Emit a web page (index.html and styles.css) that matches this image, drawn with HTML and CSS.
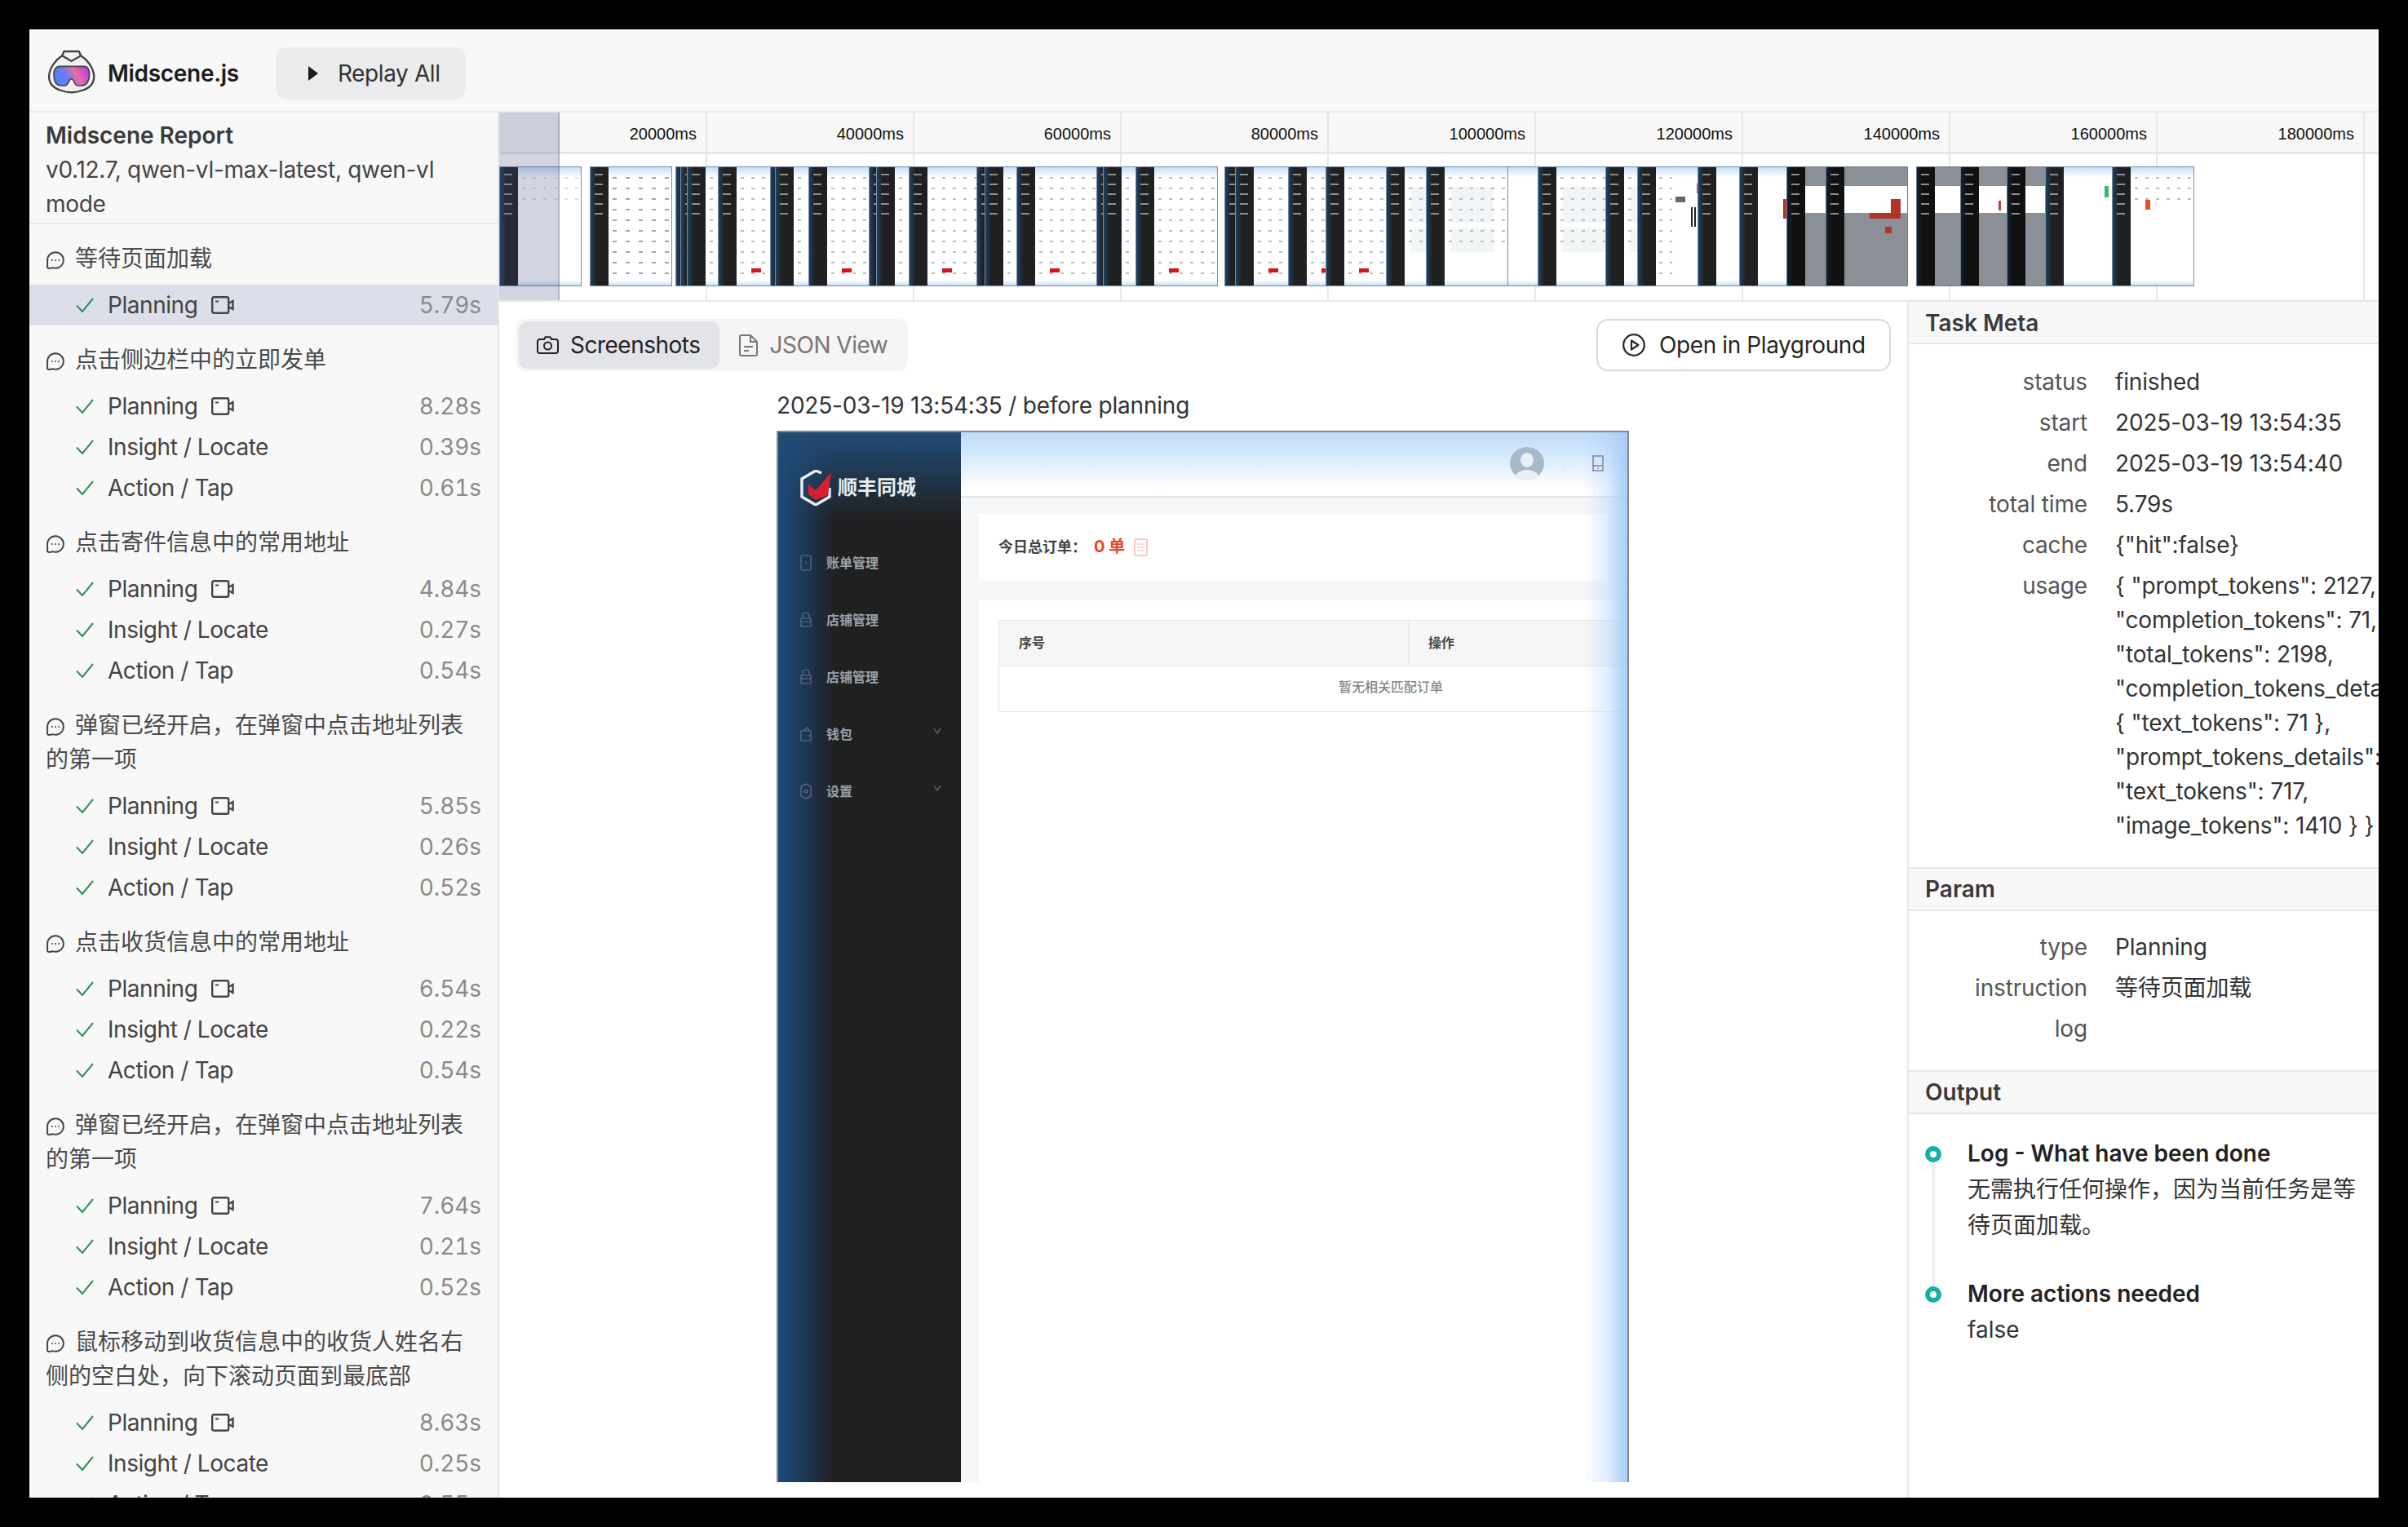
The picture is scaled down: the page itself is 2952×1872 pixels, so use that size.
FILE: index.html
```html
<!DOCTYPE html>
<html lang="en">
<head>
  <meta charset="UTF-8" />
  <title>Midscene Report</title>
  <link rel="stylesheet" href="styles.css">
</head>
<body>
  <!-- shared icons -->
  <svg class="defs" width="0" height="0">
    <symbol id="i-chat" viewBox="0 0 24 24">
      <path d="M12 2.200a9.800 9.800 0 1 1-3.600 18.900c-1.600.7-3.400 1-5.400.7-.6-.1-.9-.5-.9-1V12A9.800 9.800 0 0 1 12 2.200Z" fill="none" stroke="currentColor" stroke-width="2"/>
      <circle cx="7.800" cy="12" r="1" fill="currentColor"/><circle cx="12" cy="12" r="1" fill="currentColor"/><circle cx="16.200" cy="12" r="1" fill="currentColor"/>
    </symbol>
    <symbol id="i-check" viewBox="0 0 22 18">
      <path d="M1 9.500 8 17 21 1" fill="none" stroke="currentColor" stroke-width="2"/>
    </symbol>
    <symbol id="i-video" viewBox="0 0 28 22">
      <rect x="1.200" y="1.200" width="20" height="19.600" rx="2" fill="none" stroke="currentColor" stroke-width="2.400"/>
      <path d="M5 6.500h4" stroke="currentColor" stroke-width="2"/>
      <path d="M22 8.500 26.500 6v10L22 13.500" fill="none" stroke="currentColor" stroke-width="2.400"/>
    </symbol>
  </svg>

  <div class="app">
    <header class="topbar">
      <svg class="logo" viewBox="24 36 176 162">
        <defs>
          <linearGradient id="lens" x1="0" y1="0.6" x2="1" y2="0.3">
            <stop offset="0" stop-color="#4a86f5"/>
            <stop offset="0.4" stop-color="#7a78ee"/>
            <stop offset="0.62" stop-color="#ea6f9c"/>
            <stop offset="1" stop-color="#b63aee"/>
          </linearGradient>
        </defs>
        <path d="M85 42H140L147 58C170 72 192 100 195 130C197 160 178 178 150 186C125 195 100 195 75 186C48 178 28 160 30 130C33 100 55 72 78 58Z" fill="#f2f2f2" stroke="#444" stroke-width="7" stroke-linejoin="round"/>
        <path d="M78 58 112 78 147 58" fill="none" stroke="#444" stroke-width="7"/>
        <path d="M70 97H158C172 97 180 110 178 130C176 155 165 168 148 168H135C128 168 124 160 120 150C117 142 107 142 104 150C100 160 96 168 88 168H75C58 168 48 155 48 130C46 110 55 97 70 97Z" fill="url(#lens)" stroke="#444" stroke-width="5"/>
      </svg>
      <span class="brand">Midscene.js</span>
      <button class="replay"><span class="replay-arrow"></span>Replay All</button>
    </header>

    <div class="workspace">
      <aside class="sidebar">
        <div class="report">
          <div class="report-name">Midscene Report</div>
          <div>v0.12.7, qwen-vl-max-latest, qwen-vl mode</div>
        </div>

        <section class="group">
          <h3 class="group-title"><svg class="chat"><use href="#i-chat"/></svg>等待页面加载</h3>
          <div class="step selected"><svg class="check"><use href="#i-check"/></svg>Planning<svg class="video"><use href="#i-video"/></svg><span class="time">5.79s</span></div>
        </section>

        <section class="group">
          <h3 class="group-title"><svg class="chat"><use href="#i-chat"/></svg>点击侧边栏中的立即发单</h3>
          <div class="step"><svg class="check"><use href="#i-check"/></svg>Planning<svg class="video"><use href="#i-video"/></svg><span class="time">8.28s</span></div>
          <div class="step"><svg class="check"><use href="#i-check"/></svg>Insight / Locate<span class="time">0.39s</span></div>
          <div class="step"><svg class="check"><use href="#i-check"/></svg>Action / Tap<span class="time">0.61s</span></div>
        </section>

        <section class="group">
          <h3 class="group-title"><svg class="chat"><use href="#i-chat"/></svg>点击寄件信息中的常用地址</h3>
          <div class="step"><svg class="check"><use href="#i-check"/></svg>Planning<svg class="video"><use href="#i-video"/></svg><span class="time">4.84s</span></div>
          <div class="step"><svg class="check"><use href="#i-check"/></svg>Insight / Locate<span class="time">0.27s</span></div>
          <div class="step"><svg class="check"><use href="#i-check"/></svg>Action / Tap<span class="time">0.54s</span></div>
        </section>

        <section class="group">
          <h3 class="group-title"><svg class="chat"><use href="#i-chat"/></svg>弹窗已经开启，在弹窗中点击地址列表的第一项</h3>
          <div class="step"><svg class="check"><use href="#i-check"/></svg>Planning<svg class="video"><use href="#i-video"/></svg><span class="time">5.85s</span></div>
          <div class="step"><svg class="check"><use href="#i-check"/></svg>Insight / Locate<span class="time">0.26s</span></div>
          <div class="step"><svg class="check"><use href="#i-check"/></svg>Action / Tap<span class="time">0.52s</span></div>
        </section>

        <section class="group">
          <h3 class="group-title"><svg class="chat"><use href="#i-chat"/></svg>点击收货信息中的常用地址</h3>
          <div class="step"><svg class="check"><use href="#i-check"/></svg>Planning<svg class="video"><use href="#i-video"/></svg><span class="time">6.54s</span></div>
          <div class="step"><svg class="check"><use href="#i-check"/></svg>Insight / Locate<span class="time">0.22s</span></div>
          <div class="step"><svg class="check"><use href="#i-check"/></svg>Action / Tap<span class="time">0.54s</span></div>
        </section>

        <section class="group">
          <h3 class="group-title"><svg class="chat"><use href="#i-chat"/></svg>弹窗已经开启，在弹窗中点击地址列表的第一项</h3>
          <div class="step"><svg class="check"><use href="#i-check"/></svg>Planning<svg class="video"><use href="#i-video"/></svg><span class="time">7.64s</span></div>
          <div class="step"><svg class="check"><use href="#i-check"/></svg>Insight / Locate<span class="time">0.21s</span></div>
          <div class="step"><svg class="check"><use href="#i-check"/></svg>Action / Tap<span class="time">0.52s</span></div>
        </section>

        <section class="group">
          <h3 class="group-title"><svg class="chat"><use href="#i-chat"/></svg>鼠标移动到收货信息中的收货人姓名右侧的空白处，向下滚动页面到最底部</h3>
          <div class="step"><svg class="check"><use href="#i-check"/></svg>Planning<svg class="video"><use href="#i-video"/></svg><span class="time">8.63s</span></div>
          <div class="step"><svg class="check"><use href="#i-check"/></svg>Insight / Locate<span class="time">0.25s</span></div>
          <div class="step"><svg class="check"><use href="#i-check"/></svg>Action / Tap<span class="time">0.55s</span></div>
        </section>
      </aside>

      <main class="main">
        <div class="timeline">
          <div class="ticks">
            <div class="tick"><span class="tick-label">20000ms</span></div>
            <div class="tick"><span class="tick-label">40000ms</span></div>
            <div class="tick"><span class="tick-label">60000ms</span></div>
            <div class="tick"><span class="tick-label">80000ms</span></div>
            <div class="tick"><span class="tick-label">100000ms</span></div>
            <div class="tick"><span class="tick-label">120000ms</span></div>
            <div class="tick"><span class="tick-label">140000ms</span></div>
            <div class="tick"><span class="tick-label">160000ms</span></div>
            <div class="tick"><span class="tick-label">180000ms</span></div>
            <div class="tick"><span class="tick-label"></span></div>
          </div>
          <!-- thumbs sit at their time offset on the strip -->
          <div class="thumb t-empty" style="left:0"></div>
          <div class="thumb t-table" style="left:111px"></div>
          <div class="thumb t-form" style="left:216px"></div>
          <div class="thumb t-form" style="left:222px"></div>
          <div class="thumb t-form" style="left:230px"></div>
          <div class="thumb t-form" style="left:268px"></div>
          <div class="thumb t-form" style="left:332px"></div>
          <div class="thumb t-form" style="left:338px"></div>
          <div class="thumb t-form" style="left:379px"></div>
          <div class="thumb t-form" style="left:453px"></div>
          <div class="thumb t-form" style="left:462px"></div>
          <div class="thumb t-form" style="left:502px"></div>
          <div class="thumb t-form" style="left:585px"></div>
          <div class="thumb t-form" style="left:595px"></div>
          <div class="thumb t-form" style="left:634px"></div>
          <div class="thumb t-form" style="left:732px"></div>
          <div class="thumb t-form" style="left:740px"></div>
          <div class="thumb t-form" style="left:780px"></div>
          <div class="thumb t-form" style="left:889px"></div>
          <div class="thumb t-form" style="left:902px"></div>
          <div class="thumb t-form" style="left:967px"></div>
          <div class="thumb t-form" style="left:1013px"></div>
          <div class="thumb t-blank" style="left:1206px"></div>
          <div class="thumb t-cards" style="left:1087px"></div>
          <div class="thumb t-cards" style="left:1136px"></div>
          <div class="thumb t-cards" style="left:1273px"></div>
          <div class="thumb t-cards" style="left:1356px"></div>
          <div class="thumb t-qr" style="left:1395px"></div>
          <div class="thumb t-blank" style="left:1469px"></div>
          <div class="thumb t-blank t-redge" style="left:1520px"></div>
          <div class="thumb t-modal" style="left:1578px"></div>
          <div class="thumb t-modal t-alert" style="left:1626px"></div>
          <div class="thumb t-modal" style="left:1737px"></div>
          <div class="thumb t-modal t-sliver" style="left:1791px"></div>
          <div class="thumb t-modal" style="left:1848px"></div>
          <div class="thumb t-blank t-success" style="left:1895px"></div>
          <div class="thumb t-done" style="left:1977px"></div>
          <div class="timeline-range"></div>
        </div>

        <div class="content">
          <div class="detail">
            <div class="detail-bar">
              <div class="tabs">
                <div class="tab active">
                  <svg class="tab-camera" viewBox="0 0 27 22"><path d="M9 4 10.500 1.200h6L18 4h5.500A2.500 2.500 0 0 1 26 6.500v12a2.500 2.500 0 0 1-2.500 2.500h-20A2.500 2.500 0 0 1 1 18.500v-12A2.500 2.500 0 0 1 3.500 4Z" fill="none" stroke="currentColor" stroke-width="2"/><circle cx="13.500" cy="12" r="4.500" fill="none" stroke="currentColor" stroke-width="2"/></svg>
                  Screenshots
                </div>
                <div class="tab">
                  <svg class="tab-file" viewBox="0 0 23 27"><path d="M14 1H3a2 2 0 0 0-2 2v21a2 2 0 0 0 2 2h17a2 2 0 0 0 2-2V9Zm0 0v8h8M6 15h11M6 20h6" fill="none" stroke="currentColor" stroke-width="2"/></svg>
                  JSON View
                </div>
              </div>
              <button class="playground">
                <svg class="play-icon" viewBox="0 0 28 28"><circle cx="14" cy="14" r="12.800" fill="none" stroke="currentColor" stroke-width="2.200"/><path d="M11 8.500 19.500 14 11 19.500Z" fill="none" stroke="currentColor" stroke-width="2.200" stroke-linejoin="round"/></svg>
                Open in Playground
              </button>
            </div>

            <div class="shot-wrap">
              <div class="shot-caption">2025-03-19 13:54:35 / before planning</div>
              <div class="shot">
                <div class="shot-side">
                  <div class="shot-logo">
                    <svg class="shot-mark" viewBox="0 0 40 44"><path d="M26 4 19 1 2 11v22l17 10 17-10V22" fill="none" stroke="#e8edf2" stroke-width="3.500"/><path d="M9 17 19 25 38 3 34 31 19 37 10 30Z" fill="#d71f30"/></svg>
                    顺丰同城
                  </div>
                  <div class="shot-menu"><svg viewBox="0 0 14 20"><rect x="1" y="1" width="12" height="18" rx="1.500"/><path d="M7 8v3"/></svg>账单管理</div>
                  <div class="shot-menu"><svg viewBox="0 0 14 20"><path d="M3 8V4q0-3 4-3t4 3v4M1 8h12v10H1ZM1 12h12"/></svg>店铺管理</div>
                  <div class="shot-menu"><svg viewBox="0 0 14 20"><path d="M3 8V4q0-3 4-3t4 3v4M1 8h12v10H1ZM1 12h12"/></svg>店铺管理</div>
                  <div class="shot-menu"><svg viewBox="0 0 14 20"><path d="M1 6h12v12H1ZM3 6l6-4 2 4M9 12h4"/></svg>钱包<svg class="shot-caret" viewBox="0 0 10 8"><path d="M1 1l4 6 4-6"/></svg></div>
                  <div class="shot-menu"><svg viewBox="0 0 14 20"><path d="M7 1l6 3v12l-6 3-6-3V4Z"/><circle cx="7" cy="10" r="2"/></svg>设置<svg class="shot-caret" viewBox="0 0 10 8"><path d="M1 1l4 6 4-6"/></svg></div>
                </div>
                <div class="shot-main">
                  <div class="shot-top">
                    <svg class="shot-avatar" viewBox="0 0 42 40"><defs><clipPath id="ava"><ellipse cx="21" cy="20" rx="21" ry="20"/></clipPath></defs><ellipse cx="21" cy="20" rx="21" ry="20" fill="#a9b9cc"/><g clip-path="url(#ava)" fill="#e9eff5"><ellipse cx="21" cy="16" rx="8" ry="9"/><ellipse cx="21" cy="38" rx="15" ry="10"/></g></svg>
                    <span class="shot-sep"></span>
                    <svg class="shot-phone" viewBox="0 0 14 20"><rect x="1" y="1" width="12" height="18" fill="none" stroke="#6d7680" stroke-width="1.500"/><path d="M1 13h12M7 15.500v1.500" stroke="#6d7680" stroke-width="1.500"/></svg>
                  </div>
                  <div class="shot-body">
                    <div class="shot-card">
                      今日总订单：<span class="shot-count">0 单</span>
                      <svg class="shot-doc" viewBox="0 0 17 22"><rect x="1" y="1" width="15" height="20" rx="1" fill="none" stroke="#f1b9b4" stroke-width="1.500"/><path d="M4 7h9M4 11h9M4 15h9" stroke="#f1b9b4" stroke-width="1.200"/></svg>
                    </div>
                    <div class="shot-panel">
                      <div class="shot-table">
                        <div class="shot-head"><div class="shot-col">序号</div><div class="shot-col last">操作</div></div>
                        <div class="shot-empty">暂无相关匹配订单</div>
                      </div>
                    </div>
                  </div>
                </div>
                <div class="shot-fade"></div>
              </div>
            </div>
          </div>

          <aside class="pane">
            <div class="pane-title first">Task Meta</div>
            <div class="meta">
              <div class="meta-row"><div class="meta-key">status</div><div class="meta-val">finished</div></div>
              <div class="meta-row"><div class="meta-key">start</div><div class="meta-val">2025-03-19 13:54:35</div></div>
              <div class="meta-row"><div class="meta-key">end</div><div class="meta-val">2025-03-19 13:54:40</div></div>
              <div class="meta-row"><div class="meta-key">total time</div><div class="meta-val">5.79s</div></div>
              <div class="meta-row"><div class="meta-key">cache</div><div class="meta-val">{"hit":false}</div></div>
              <div class="meta-row"><div class="meta-key">usage</div><div class="meta-val">{ "prompt_tokens": 2127,<br>"completion_tokens": 71,<br>"total_tokens": 2198,<br>"completion_tokens_details":<br>{ "text_tokens": 71 },<br>"prompt_tokens_details": {<br>"text_tokens": 717,<br>"image_tokens": 1410 } }</div></div>
            </div>
            <div class="pane-title">Param</div>
            <div class="meta tight">
              <div class="meta-row"><div class="meta-key">type</div><div class="meta-val">Planning</div></div>
              <div class="meta-row"><div class="meta-key">instruction</div><div class="meta-val">等待页面加载</div></div>
              <div class="meta-row"><div class="meta-key">log</div><div class="meta-val"></div></div>
            </div>
            <div class="pane-title">Output</div>
            <div class="output">
              <div class="output-item">
                <div class="output-name">Log - What have been done</div>
                <div>无需执行任何操作，因为当前任务是等待页面加载。</div>
              </div>
              <div class="output-item last">
                <div class="output-name">More actions needed</div>
                <div>false</div>
              </div>
            </div>
          </aside>
        </div>
      </main>
    </div>
  </div>
</body>
</html>
```

FILE: styles.css
```css
* {
  box-sizing: border-box;
}

html {
  overflow: hidden;
}

body {
  margin: 0;
  padding: 36px;
  background-color: #000;
  font-family: Inter, "Noto Sans CJK SC", sans-serif;
  font-size: 28px;
  line-height: 42px;
  color: #444;
}

.defs {
  position: absolute;
}

.app {
  width: 2880px;
  height: 1800px;
  background-color: #fff;
  overflow: hidden;
  display: flex;
  flex-direction: column;
}

/* top bar */
.topbar {
  flex: none;
  height: 102px;
  display: flex;
  align-items: center;
  padding: 8px 0 0 22px;
  background-color: #f8f8f8;
  border-bottom: 2px solid #e8e8e8;
}

.logo {
  width: 59px;
  height: 54px;
  margin-top: -5px;
}

.brand {
  margin-left: 15px;
  font-weight: 600;
  letter-spacing: -0.3px;
  color: #1c1c1c;
}

.replay {
  margin-left: 45px;
  height: 64px;
  width: 233px;
  padding: 0 0 0 40px;
  display: flex;
  align-items: center;
  border: none;
  border-radius: 14px;
  background-color: #ececec;
  font: inherit;
  letter-spacing: -0.4px;
  color: #333;
}

.replay-arrow {
  width: 0;
  height: 0;
  margin-right: 24px;
  border-left: 12px solid #1c1c1c;
  border-top: 9px solid transparent;
  border-bottom: 9px solid transparent;
}

.workspace {
  flex: 1;
  min-height: 0;
  display: flex;
}

/* left list */
.sidebar {
  flex: none;
  width: 576px;
  background-color: #f8f8f8;
  border-right: 2px solid #e8e8e8;
  overflow: hidden;
}

.report {
  height: 137px;
  padding: 7px 20px 0;
  border-bottom: 2px solid #e8e8e8;
  letter-spacing: -0.3px;
}

.report-name {
  font-weight: 600;
  letter-spacing: 0;
  color: #3a3a3a;
}

.group {
  padding-top: 21px;
}

.group-title {
  margin: 0 0 11px;
  padding: 0 20px;
  font-size: 28px;
  font-weight: 400;
  color: #4a4a4a;
}

.chat {
  width: 24px;
  height: 24px;
  margin-right: 12px;
  vertical-align: -4px;
  color: #444;
}

.step {
  height: 50px;
  display: flex;
  align-items: center;
  padding: 0 20px 0 57px;
  letter-spacing: -0.45px;
}

.step.selected {
  background-color: #dcdfe9;
}

.check {
  width: 22px;
  height: 18px;
  margin-right: 17px;
  color: #2f8f5b;
}

.video {
  width: 28px;
  height: 22px;
  margin-left: 17px;
  color: #444;
}

.time {
  margin-left: auto;
  font-variant-numeric: tabular-nums;
  letter-spacing: -0.1px;
  color: #8a8a8a;
}

/* timeline strip */
.main {
  flex: 1;
  min-width: 0;
  display: flex;
  flex-direction: column;
}

.timeline {
  flex: none;
  position: relative;
  height: 232px;
  border-bottom: 2px solid #e8e8e8;
  overflow: hidden;
}

.ticks {
  display: flex;
  height: 100%;
  margin-left: 1px;
}

.tick {
  flex: none;
  width: 254px;
  border-right: 2px solid #e8e8e8;
}

.tick-label {
  display: block;
  height: 51px;
  padding-right: 11px;
  background-color: #f8f8f8;
  border-bottom: 3px solid #e8e8e8;
  text-align: right;
  font-family: "Liberation Sans", sans-serif;
  font-size: 20px;
  line-height: 52px;
  color: #111;
}

.timeline-range {
  position: absolute;
  left: 0;
  top: 0;
  bottom: 0;
  width: 74px;
  background-color: rgba(68, 76, 135, 0.24);
  border-right: 2px solid rgba(90, 96, 140, 0.3);
}

.thumb {
  position: absolute;
  top: 66px;
  width: 101px;
  height: 147px;
  border: 1px solid #7b8da3;
  background:
    linear-gradient(180deg, #c4ddfa, #fff) 22px 0 / 100% 12px no-repeat,
    linear-gradient(0deg, #c4ddfa, #fff) 22px 100% / 100% 6px no-repeat,
    linear-gradient(90deg, #1d4266, #202020 7px) 0 0 / 22px 100% no-repeat,
    #fff;
}

/* sidebar text in a thumb */
.thumb::before {
  content: "";
  position: absolute;
  left: 5px;
  top: 8px;
  width: 10px;
  height: 56px;
  background-color: #8e8e8e;
  -webkit-mask-image: repeating-linear-gradient(180deg, #000 0 2px, transparent 2px 12px);
  mask-image: repeating-linear-gradient(180deg, #000 0 2px, transparent 2px 12px);
}

/* page text in a thumb */
.thumb::after {
  content: "";
  position: absolute;
  left: 27px;
  right: 3px;
  top: 12px;
  bottom: 6px;
  background-image: repeating-linear-gradient(90deg, #bcbcbc 0 4px, transparent 4px 13px);
  -webkit-mask-image: repeating-linear-gradient(180deg, #000 0 2px, transparent 2px 13px);
  mask-image: repeating-linear-gradient(180deg, #000 0 2px, transparent 2px 13px);
}

.t-empty::after {
  bottom: 100px;
  opacity: 0.5;
}

.t-table::after {
  background-image: repeating-linear-gradient(90deg, #9aa6b8 0 5px, transparent 5px 16px);
}

.t-form {
  background:
    linear-gradient(#d8141a, #d8141a) 40px 124px / 12px 5px no-repeat,
    linear-gradient(180deg, #c4ddfa, #fff) 22px 0 / 100% 12px no-repeat,
    linear-gradient(0deg, #c4ddfa, #fff) 22px 100% / 100% 6px no-repeat,
    linear-gradient(90deg, #1d4266, #202020 7px) 0 0 / 22px 100% no-repeat,
    #fff;
}

.t-cards {
  background:
    linear-gradient(#f1f5f9, #f1f5f9) 30px 24px / 52px 44px no-repeat,
    linear-gradient(#f1f7f4, #f1f7f4) 30px 74px / 52px 30px no-repeat,
    linear-gradient(180deg, #c4ddfa, #fff) 22px 0 / 100% 12px no-repeat,
    linear-gradient(0deg, #c4ddfa, #fff) 22px 100% / 100% 6px no-repeat,
    linear-gradient(90deg, #1d4266, #202020 7px) 0 0 / 22px 100% no-repeat,
    #fff;
}

.t-cards::after {
  bottom: 46px;
}

.t-blank::after,
.t-modal::after,
.t-done::after {
  display: none;
}

.t-qr {
  background:
    repeating-linear-gradient(90deg, #222 0 2px, #fff 2px 4px) 65px 49px / 11px 24px no-repeat,
    linear-gradient(#666, #666) 46px 36px / 12px 7px no-repeat,
    linear-gradient(#c8412f, #c8412f) 72px 20px / 3px 12px no-repeat,
    linear-gradient(180deg, #c4ddfa, #fff) 22px 0 / 100% 12px no-repeat,
    linear-gradient(90deg, #1d4266, #202020 7px) 0 0 / 22px 100% no-repeat,
    #fff;
}

.t-qr::after {
  left: 26px;
  width: 16px;
}

.t-redge {
  background:
    linear-gradient(#b8352a, #b8352a) 53px 39px / 5px 24px no-repeat,
    linear-gradient(180deg, #c4ddfa, #fff) 22px 0 / 100% 12px no-repeat,
    linear-gradient(0deg, #c4ddfa, #fff) 22px 100% / 100% 6px no-repeat,
    linear-gradient(90deg, #1d4266, #202020 7px) 0 0 / 22px 100% no-repeat,
    #fff;
}

.t-success {
  background:
    linear-gradient(#3fb950, #3fb950) 72px 23px / 5px 14px no-repeat,
    linear-gradient(180deg, #c4ddfa, #fff) 22px 0 / 100% 12px no-repeat,
    linear-gradient(0deg, #c4ddfa, #fff) 22px 100% / 100% 6px no-repeat,
    linear-gradient(90deg, #1d4266, #202020 7px) 0 0 / 22px 100% no-repeat,
    #fff;
}

.t-modal {
  border-color: #727c88;
  background:
    linear-gradient(#fff, #fff) 22px 23px / 78px 33px no-repeat,
    linear-gradient(#8b8f96, #8b8f96) 22px 0 / 100% 100% no-repeat,
    linear-gradient(90deg, #0f2236, #101010 7px) 0 0 / 22px 100% no-repeat;
}

.t-alert {
  background:
    linear-gradient(#fff, #fff) 22px 23px / 57px 33px no-repeat,
    linear-gradient(#b03428, #b03428) 53px 39px / 38px 24px no-repeat,
    linear-gradient(#b03428, #b03428) 72px 73px / 8px 8px no-repeat,
    linear-gradient(#fff, #fff) 22px 23px / 78px 33px no-repeat,
    linear-gradient(#8b8f96, #8b8f96) 22px 0 / 100% 100% no-repeat,
    linear-gradient(90deg, #0f2236, #101010 7px) 0 0 / 22px 100% no-repeat;
}

.t-sliver {
  background:
    linear-gradient(#c8412f, #c8412f) 46px 41px / 3px 12px no-repeat,
    linear-gradient(#fff, #fff) 22px 23px / 78px 33px no-repeat,
    linear-gradient(#8b8f96, #8b8f96) 22px 0 / 100% 100% no-repeat,
    linear-gradient(90deg, #0f2236, #101010 7px) 0 0 / 22px 100% no-repeat;
}

.t-done {
  background:
    linear-gradient(#ee4b26, #ee4b26) 40px 40px / 6px 12px no-repeat,
    linear-gradient(180deg, #c4ddfa, #fff) 22px 0 / 100% 12px no-repeat,
    linear-gradient(0deg, #c4ddfa, #fff) 22px 100% / 100% 6px no-repeat,
    linear-gradient(90deg, #1d4266, #202020 7px) 0 0 / 22px 100% no-repeat,
    #fff;
}

.t-done::after {
  display: block;
  bottom: 100px;
}

/* detail area */
.content {
  flex: 1;
  min-height: 0;
  display: flex;
}

.detail {
  flex: 1;
  min-width: 0;
  overflow: hidden;
}

.detail-bar {
  display: flex;
  justify-content: space-between;
  align-items: flex-start;
  padding: 21px 20px 0 21px;
}

.tabs {
  height: 64px;
  display: flex;
  padding: 3px;
  border-radius: 12px;
  background-color: #f5f5f5;
  letter-spacing: -0.5px;
}

.tab {
  height: 58px;
  display: flex;
  align-items: center;
  padding: 0 22px 0 24px;
  border-radius: 10px;
  color: #777;
}

.tab.active {
  padding: 0 23px 0 22px;
  background-color: #e3e4e9;
  color: #222;
}

.tab-camera {
  width: 27px;
  height: 22px;
  margin-right: 14px;
}

.tab-file {
  width: 23px;
  height: 27px;
  margin-right: 15px;
}

.playground {
  width: 361px;
  height: 64px;
  display: flex;
  align-items: center;
  padding: 0 0 0 30px;
  border: 2px solid #d9d9d9;
  border-radius: 14px;
  background-color: #fff;
  font: inherit;
  letter-spacing: -0.4px;
  color: #262626;
}

.play-icon {
  width: 28px;
  height: 28px;
  margin-right: 17px;
}

.shot-wrap {
  margin: 21px 0 0 340px;
}

.shot-caption {
  height: 52px;
  letter-spacing: -0.2px;
  color: #333;
}

/* the recorded page */
.shot {
  position: relative;
  width: 1045px;
  height: 1289px;
  display: flex;
  border: 2px solid #888;
  border-bottom: none;
  overflow: hidden;
  font-weight: 700;
  font-size: 16px;
  line-height: 20px;
}

.shot-side {
  flex: none;
  width: 224px;
  padding-left: 27px;
  background:
    linear-gradient(180deg, #214a75, rgba(33, 74, 117, 0) 110px),
    linear-gradient(90deg, #1c4a7d, #202020 70px);
  color: #99a1a9;
}

.shot-logo {
  height: 43px;
  margin: 46px 0 36px;
  display: flex;
  align-items: center;
  font-size: 24px;
  color: #e8edf2;
  white-space: nowrap;
}

.shot-mark {
  width: 40px;
  height: 44px;
  margin-right: 6px;
}

.shot-menu {
  height: 70px;
  display: flex;
  align-items: center;
  fill: none;
  stroke: #5d7286;
  stroke-width: 1.2;
}

.shot-menu > svg {
  width: 14px;
  height: 20px;
  margin-right: 18px;
}

.shot-menu > svg.shot-caret {
  width: 10px;
  height: 8px;
  margin: -8px 0 0 auto;
  margin-right: 24px;
}

.shot-main {
  flex: 1;
  min-width: 0;
  display: flex;
  flex-direction: column;
}

.shot-top {
  flex: none;
  height: 80px;
  display: flex;
  align-items: flex-start;
  padding: 18px 0 0 673px;
  background: linear-gradient(180deg, #bcdbfb, #fff 90%);
  border-bottom: 2px solid #e6e6e6;
}

.shot-avatar {
  width: 42px;
  height: 40px;
}

.shot-sep {
  width: 1px;
  height: 16px;
  margin: 12px 0 0 23px;
  background-color: #dfe5ec;
}

.shot-phone {
  width: 14px;
  height: 20px;
  margin: 10px 0 0 35px;
}

.shot-body {
  flex: 1;
  display: flex;
  flex-direction: column;
  padding: 20px 0 0 22px;
  background-color: #f6f7f8;
}

.shot-card {
  flex: none;
  height: 82px;
  margin-right: 24px;
  padding: 30px 0 0 24px;
  background-color: #fff;
  font-size: 18px;
  color: #444;
}

.shot-count {
  margin-left: 9px;
  font-size: 20px;
  color: #e8491f;
}

.shot-doc {
  width: 17px;
  height: 22px;
  margin-left: 6px;
  vertical-align: -5px;
}

.shot-panel {
  flex: 1;
  margin-top: 24px;
  padding: 24px 0 0 24px;
  background-color: #fff;
  overflow: hidden;
}

.shot-table {
  width: 962px;
  border: 1px solid #e6e6e6;
}

.shot-head {
  height: 56px;
  display: flex;
  background-color: #f6f6f6;
  border-bottom: 1px solid #e6e6e6;
  color: #444;
}

.shot-col {
  width: 502px;
  padding: 17px 0 0 24px;
  border-right: 1px solid #e6e6e6;
}

.shot-col.last {
  flex: 1;
  border-right: none;
}

.shot-empty {
  height: 55px;
  padding-top: 15px;
  text-align: center;
  font-weight: 500;
  color: #888;
}

.shot-fade {
  position: absolute;
  top: 0;
  right: 0;
  bottom: 0;
  width: 54px;
  background: linear-gradient(90deg, rgba(168, 204, 249, 0), rgba(168, 204, 249, 0.35) 55%, #a8ccf9);
}

/* right pane */
.pane {
  flex: none;
  width: 578px;
  border-left: 2px solid #e8e8e8;
  overflow: hidden;
  white-space: nowrap;
}

.pane-title {
  height: 54px;
  padding: 2px 0 0 20px;
  background-color: #f8f8f8;
  border-top: 2px solid #e8e8e8;
  border-bottom: 2px solid #e8e8e8;
  font-weight: 600;
  line-height: 46px;
  color: #3a3a3a;
}

.pane-title.first {
  height: 52px;
  padding-top: 0;
  border-top: none;
  line-height: 52px;
}

.meta {
  padding: 21px 0 26px;
}

.meta.tight {
  padding: 19px 0 26px;
}

.meta-row {
  display: flex;
  padding: 4px 0;
}

.meta-key {
  flex: none;
  width: 219px;
  text-align: right;
  letter-spacing: -0.15px;
  color: #555;
}

.meta-val {
  margin-left: 34px;
  min-height: 42px;
  letter-spacing: -0.15px;
  color: #333;
}

.output {
  padding: 26px 0 0 72px;
  line-height: 44px;
  white-space: normal;
  color: #333;
}

.output-item {
  position: relative;
  width: 480px;
  padding-bottom: 40px;
}

/* ring on the rail */
.output-item::before {
  content: "";
  position: absolute;
  left: -52px;
  top: 13px;
  width: 8px;
  height: 8px;
  border: 6px solid #12b2a2;
  border-radius: 50%;
  box-sizing: content-box;
  background-color: #fff;
}

.output-item::after {
  content: "";
  position: absolute;
  left: -44px;
  top: 33px;
  bottom: -13px;
  width: 4px;
  background-color: #f0f0f0;
}

.output-item.last::after {
  display: none;
}

.output-name {
  font-weight: 600;
  color: #222;
}
```
